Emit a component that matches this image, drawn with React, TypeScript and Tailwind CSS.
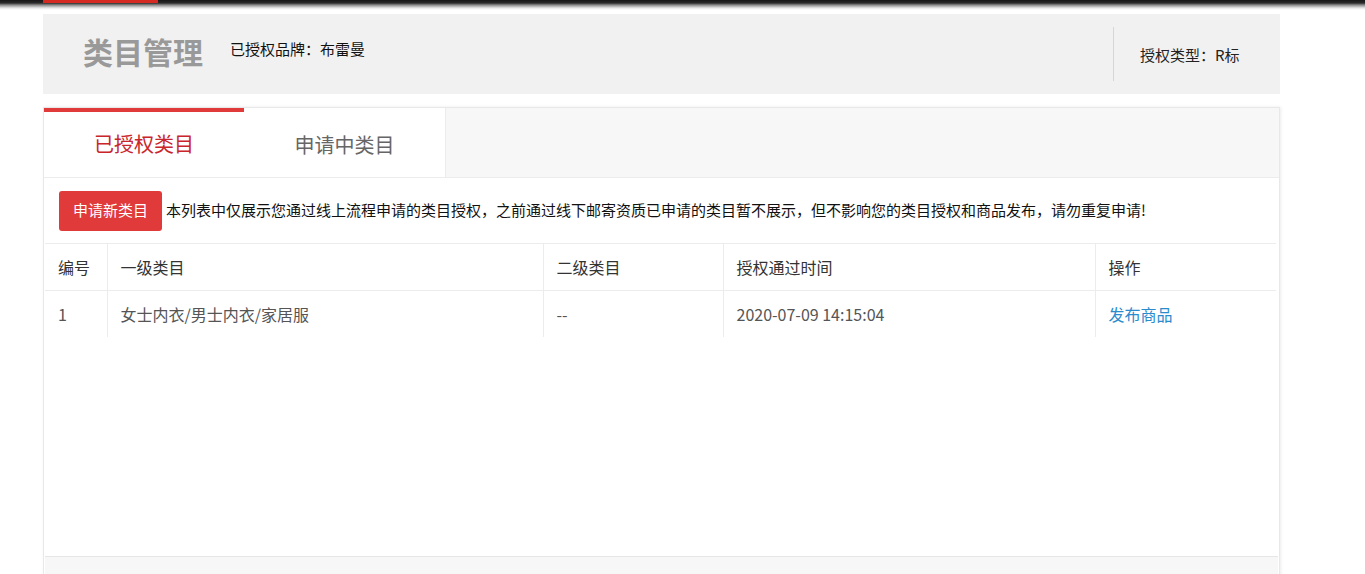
import React from "react";

const rows = [
  { id: 1, first: "女士内衣/男士内衣/家居服", second: "--", time: "2020-07-09 14:15:04" },
];

export default function App() {
  return (
    <div
      className="w-[1365px] h-[574px] overflow-hidden bg-white"
      style={{ fontFamily: '"Noto Sans CJK SC", "Noto Sans", sans-serif' }}
    >
      {/* top bar */}
      <div className="h-[10px] bg-[linear-gradient(to_bottom,#161616_0px,#2a2a2a_3px,#8a8a8a_5px,#e6e6e6_8px,#ffffff_10px)] flex items-start">
        <div className="ml-[43px] w-[115px] h-[3px] bg-[#d42a22]"></div>
      </div>

      <div className="ml-[43px] w-[1237px]">
        {/* header */}
        <div className="mt-[4px] h-[80px] bg-[#f1f1f1] flex">
          <div className="flex-1 flex items-start pt-[20px] pl-[40px]">
            <h1 className="text-[30px] leading-[34px] font-bold text-[#999]">类目管理</h1>
            <span className="ml-[27px] mt-[5px] text-[15px] leading-[20px] text-[#111]">已授权品牌：布雷曼</span>
          </div>
          <div className="my-[13px] w-px bg-[#d6d6d6]"></div>
          <div className="w-[166px] pl-[26px] flex items-center pt-[2px] text-[15px] text-[#222]">授权类型：R标</div>
        </div>

        {/* panel */}
        <div className="mt-[13px] border border-[#e8e8e8] shadow-[1px_0_3px_rgba(0,0,0,0.08)]">
          <div className="h-[70px] bg-[#f7f7f7] border-b border-[#ececec] flex">
            <div className="w-[200px] bg-white border-t-4 border-[#e03a3a] flex items-center justify-center text-[20px] text-[#c9252b] pb-[2px]">
              已授权类目
            </div>
            <div className="w-[202px] bg-white border-r border-[#ececec] flex items-center justify-center text-[20px] text-[#666] pt-[4px]">
              申请中类目
            </div>
          </div>

          <div className="px-px">
            <div className="h-[65px] flex items-center pl-[14px]">
              <button className="w-[103px] h-[40px] rounded-[3px] bg-[#e03a3a] text-white text-[15px]">申请新类目</button>
              <span className="ml-[4px] text-[15px] text-[#111]">
                本列表中仅展示您通过线上流程申请的类目授权，之前通过线下邮寄资质已申请的类目暂不展示，但不影响您的类目授权和商品发布，请勿重复申请!
              </span>
            </div>

            <table className="w-[1231px] border-collapse text-[16px]">
              <thead>
                <tr className="h-[47px] border-t border-b border-[#ececec] text-[#333]">
                  <th className="w-[62px] text-left font-normal pl-[13px]">编号</th>
                  <th className="w-[436px] text-left font-normal pl-[13px] border-l border-[#ececec]">一级类目</th>
                  <th className="w-[180px] text-left font-normal pl-[13px] border-l border-[#ececec]">二级类目</th>
                  <th className="w-[372px] text-left font-normal pl-[13px] border-l border-[#ececec]">授权通过时间</th>
                  <th className="text-left font-normal pl-[13px] border-l border-[#ececec]">操作</th>
                </tr>
              </thead>
              <tbody>
                {rows.map((r) => (
                  <tr key={r.id} className="h-[46px] text-[#555]">
                    <td className="pl-[13px]">{r.id}</td>
                    <td className="pl-[13px] border-l border-[#ececec]">{r.first}</td>
                    <td className="pl-[13px] border-l border-[#ececec]">{r.second}</td>
                    <td className="pl-[13px] border-l border-[#ececec]">{r.time}</td>
                    <td className="pl-[13px] border-l border-[#ececec]">
                      <a className="text-[#2a8ccc] cursor-pointer">发布商品</a>
                    </td>
                  </tr>
                ))}
              </tbody>
            </table>

            <div className="h-[219px]"></div>
            <div className="h-[40px] bg-[#f7f7f7] border-t border-[#e6e6e6]"></div>
          </div>
        </div>
      </div>
    </div>
  );
}
